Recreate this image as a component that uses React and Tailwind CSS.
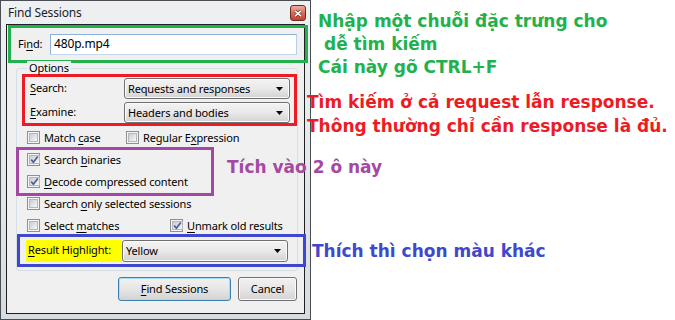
import React from 'react';

function CheckBox({ checked }) {
  return (
    <span className="w-[13px] h-[13px] shrink-0 flex border border-[#8e8f8f] bg-[#f4f4f4] p-[1px]">
      <span className="flex-1 flex items-center justify-center border border-[#b4b8bd] bg-linear-to-br from-[#c9cdd2] to-[#f7f7f7]">
        {checked && (
          <svg width="9" height="9" viewBox="0 0 9 9">
            <path d="M1.2 4.6 L3.4 7.2 L7.8 1.4" fill="none" stroke="#4b5c9b" strokeWidth="1.7" />
          </svg>
        )}
      </span>
    </span>
  );
}

function Option({ checked, children }) {
  return (
    <label className="flex items-center gap-[4px] h-[13px] leading-[13px] whitespace-nowrap">
      <CheckBox checked={checked} />
      <span>{children}</span>
    </label>
  );
}

function Combo({ value, tall }) {
  return (
    <div
      className={`${tall ? 'h-[22px]' : 'h-[21px]'} w-[166px] shrink-0 flex items-center justify-between pl-[3px] pr-[6px] border border-[#707070] rounded-[3px] bg-linear-to-b from-[#f3f3f3] via-[#e9e9e9] to-[#d2d2d2] shadow-[inset_0_0_0_1px_#fbfbfb]`}
    >
      <span className="leading-[13px]">{value}</span>
      <svg width="7" height="4" viewBox="0 0 7 4">
        <path d="M0 0h7L3.5 4z" fill="#000" />
      </svg>
    </div>
  );
}

function FindDialog() {
  return (
    <div className="w-[311px] h-[320px] shrink-0 flex flex-col border border-[#4a4d52] bg-linear-to-b from-[#eef0f2] via-[#e4e8ec] to-[#d6dbe0] font-['Noto_Sans','Liberation_Sans',sans-serif] text-[11px] text-black tracking-[-0.15px]">
      <div className="h-[23px] shrink-0 flex items-start justify-between pl-[7px] pr-[4px]">
        <span className="text-[12px] leading-[23px] text-[#1e1e1e]">Find Sessions</span>
        <div className="mt-[4px] w-[16px] h-[16px] rounded-[3px] border border-[#6e2a22] bg-linear-to-b from-[#eab0a2] via-[#d46a58] to-[#c24431] flex items-center justify-center">
          <svg width="8" height="7" viewBox="0 0 8 7">
            <path d="M1 0.8L7 6.2M7 0.8L1 6.2" stroke="#5a1a12" strokeWidth="2.6" />
            <path d="M1 0.8L7 6.2M7 0.8L1 6.2" stroke="#fff" strokeWidth="1.6" />
          </svg>
        </div>
      </div>

      <div className="mx-[5px] h-[290px] shrink-0 flex flex-col items-start border border-[#1f1f1f] bg-[#f0f0f0]">
        {/* Find */}
        <div className="ml-[1px] w-[300px] h-[38px] shrink-0 flex items-center justify-between border-[3px] border-[#22b14c] pl-[7px] pr-[8px]">
          <span>Fi<u className="underline-offset-2">n</u>d:</span>
          <div className="w-[247px] h-[21px] flex items-center pl-[3px] bg-white border border-[#8fb2da] border-r-[#b7cfe9] border-b-[#c5d8ee]">
            <span className="text-[12px]">480p.mp4</span>
          </div>
        </div>

        {/* Options group */}
        <div className="relative ml-[9px] mt-[5px] w-[282px] h-[203px] shrink-0 flex flex-col items-start border border-[#d5dfe5] rounded-[3px]">
          <span className="absolute left-[10px] top-[-8px] px-[2px] bg-[#f0f0f0] leading-[13px]">Options</span>

          <div className="ml-[5px] mt-[5px] w-[275px] h-[52px] shrink-0 flex flex-col gap-[3px] pt-[1px] border-[3px] border-[#ed1c24]">
            <div className="flex items-center pl-[5px]">
              <span className="w-[94px]"><u className="underline-offset-2">S</u>earch:</span>
              <Combo value="Requests and responses" />
            </div>
            <div className="flex items-center pl-[5px]">
              <span className="w-[94px]"><u className="underline-offset-2">E</u>xamine:</span>
              <Combo value="Headers and bodies" />
            </div>
          </div>

          <div className="mt-[5px] pl-[10px] flex">
            <div className="w-[99px]">
              <Option>Match <u className="underline-offset-2">c</u>ase</Option>
            </div>
            <Option>Regular E<u className="underline-offset-2">x</u>pression</Option>
          </div>

          <div className="ml-[-1px] mt-[3px] flex items-start">
            <div className="w-[198px] h-[49px] shrink-0 flex flex-col gap-[9px] pt-[3px] pl-[8px] border-[3px] border-[#a349a4]">
              <Option checked>Search <u className="underline-offset-2">b</u>inaries</Option>
              <Option checked><u className="underline-offset-2">D</u>ecode compressed content</Option>
            </div>
            <span className="relative z-10 ml-[13px] mt-[9px] whitespace-nowrap font-['DejaVu_Sans',sans-serif] font-bold text-[17px] leading-[23px] tracking-normal text-[#a349a4]">
              Tích vào 2 ô này
            </span>
          </div>

          <div className="mt-[1px] pl-[10px]">
            <Option>Search <u className="underline-offset-2">o</u>nly selected sessions</Option>
          </div>

          <div className="mt-[9px] pl-[10px] flex">
            <div className="w-[143px]">
              <Option>Select <u className="underline-offset-2">m</u>atches</Option>
            </div>
            <Option checked><u className="underline-offset-2">U</u>nmark old results</Option>
          </div>

          <div className="mt-[2px] w-[289px] h-[33px] shrink-0 flex items-center pl-[6px] border-[3px] border-[#3f48cc]">
            <span className="w-[96px] h-[22px] flex items-center pl-[2px] bg-[#ffff00]">
              <span><u className="underline-offset-2">R</u>esult Highlight:</span>
            </span>
            <Combo value="Yellow" tall />
          </div>
        </div>

        {/* Buttons */}
        <div className="mt-[6px] w-full flex justify-end gap-[7px] pr-[7px]">
          <button className="w-[113px] h-[24px] rounded-[3px] border border-[#3c7fb1] bg-linear-to-b from-[#f2f2f2] via-[#e6e6e6] to-[#d3d3d3] shadow-[inset_0_0_0_1px_#a9dcf6]">
            <u className="underline-offset-2">F</u>ind Sessions
          </button>
          <button className="w-[59px] h-[24px] rounded-[3px] border border-[#707070] bg-linear-to-b from-[#f2f2f2] via-[#e6e6e6] to-[#d3d3d3] shadow-[inset_0_0_0_1px_#fbfbfb]">
            Cancel
          </button>
        </div>
      </div>
    </div>
  );
}

export default function App() {
  return (
    <div className="w-[675px] h-[320px] flex bg-white overflow-hidden">
      <FindDialog />
      <div className="flex flex-col items-start font-['DejaVu_Sans',sans-serif] font-bold text-[17px] whitespace-nowrap">
        <div className="ml-[7px] mt-[10px] leading-[23px] text-[#22b14c]">
          <div>Nhập một chuỗi đặc trưng cho</div>
          <div className="pl-[6px]">dễ tìm kiếm</div>
          <div>Cái này gõ CTRL+F</div>
        </div>
        <div className="relative z-10 ml-[-4px] mt-[11px] leading-[24px] text-[#ed1c24]">
          <div>Tìm kiếm ở cả request lẫn response.</div>
          <div>Thông thường chỉ cần response là đủ.</div>
        </div>
        <div className="ml-[1px] mt-[102px] leading-[23px] text-[#3f48cc]">
          Thích thì chọn màu khác
        </div>
      </div>
    </div>
  );
}
